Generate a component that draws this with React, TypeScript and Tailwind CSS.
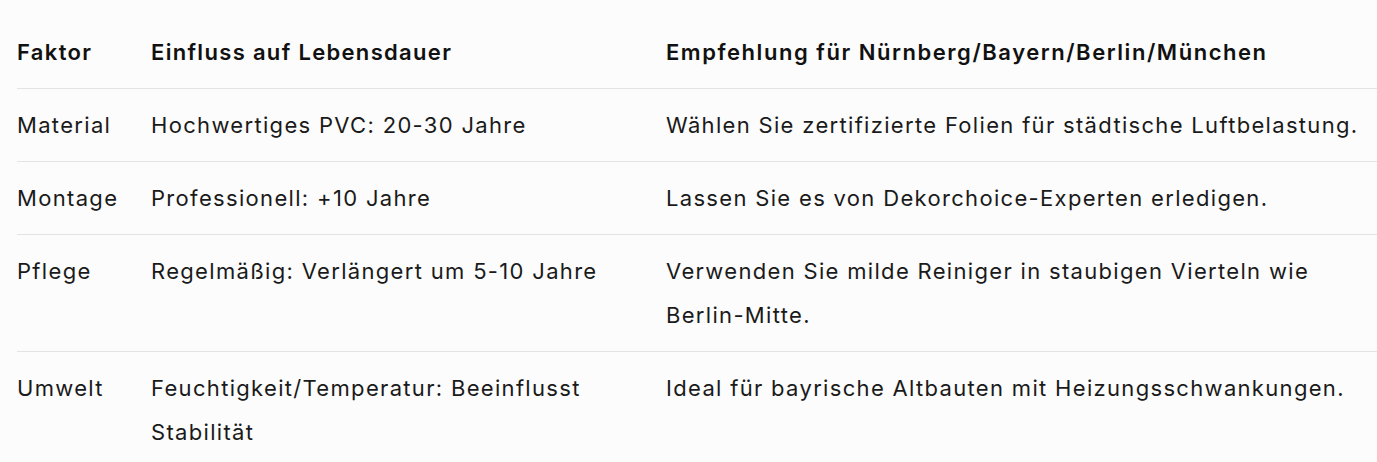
import React from "react";

const ROWS = [
  {
    factor: "Material",
    impact: "Hochwertiges PVC: 20-30 Jahre",
    tip: "Wählen Sie zertifizierte Folien für städtische Luftbelastung.",
  },
  {
    factor: "Montage",
    impact: "Professionell: +10 Jahre",
    tip: "Lassen Sie es von Dekorchoice-Experten erledigen.",
  },
  {
    factor: "Pflege",
    impact: "Regelmäßig: Verlängert um 5-10 Jahre",
    tip: "Verwenden Sie milde Reiniger in staubigen Vierteln wie Berlin-Mitte.",
  },
  {
    factor: "Umwelt",
    impact: "Feuchtigkeit/Temperatur: Beeinflusst Stabilität",
    tip: "Ideal für bayrische Altbauten mit Heizungsschwankungen.",
  },
];

export default function App() {
  return (
    <div className="min-h-screen w-full overflow-hidden bg-[#fcfcfc] pt-4 pl-[17px] font-['Inter','Liberation_Sans',sans-serif] text-[22px] leading-[44px] tracking-[0.06em] text-[#1a1a1a]">
      <table className="w-full table-fixed border-collapse text-left">
        <colgroup>
          <col className="w-[134px]" />
          <col className="w-[515px]" />
          <col />
        </colgroup>
        <thead>
          <tr className="border-b border-[#e3e3e3]">
            <th className="py-[14px] pr-2 font-semibold text-[#111]">Faktor</th>
            <th className="py-[14px] pr-2 font-semibold text-[#111]">Einfluss auf Lebensdauer</th>
            <th className="py-[14px] font-semibold tracking-[0.07em] text-[#111]">
              Empfehlung für Nürnberg/Bayern/Berlin/München
            </th>
          </tr>
        </thead>
        <tbody>
          {ROWS.map((r, i) => (
            <tr
              key={r.factor}
              className={i < ROWS.length - 1 ? "border-b border-[#e3e3e3]" : ""}
            >
              <td className="py-[14px] pr-2 align-top">{r.factor}</td>
              <td className="py-[14px] pr-[56px] align-top">{r.impact}</td>
              <td className="py-[14px] align-top">{r.tip}</td>
            </tr>
          ))}
        </tbody>
      </table>
    </div>
  );
}
